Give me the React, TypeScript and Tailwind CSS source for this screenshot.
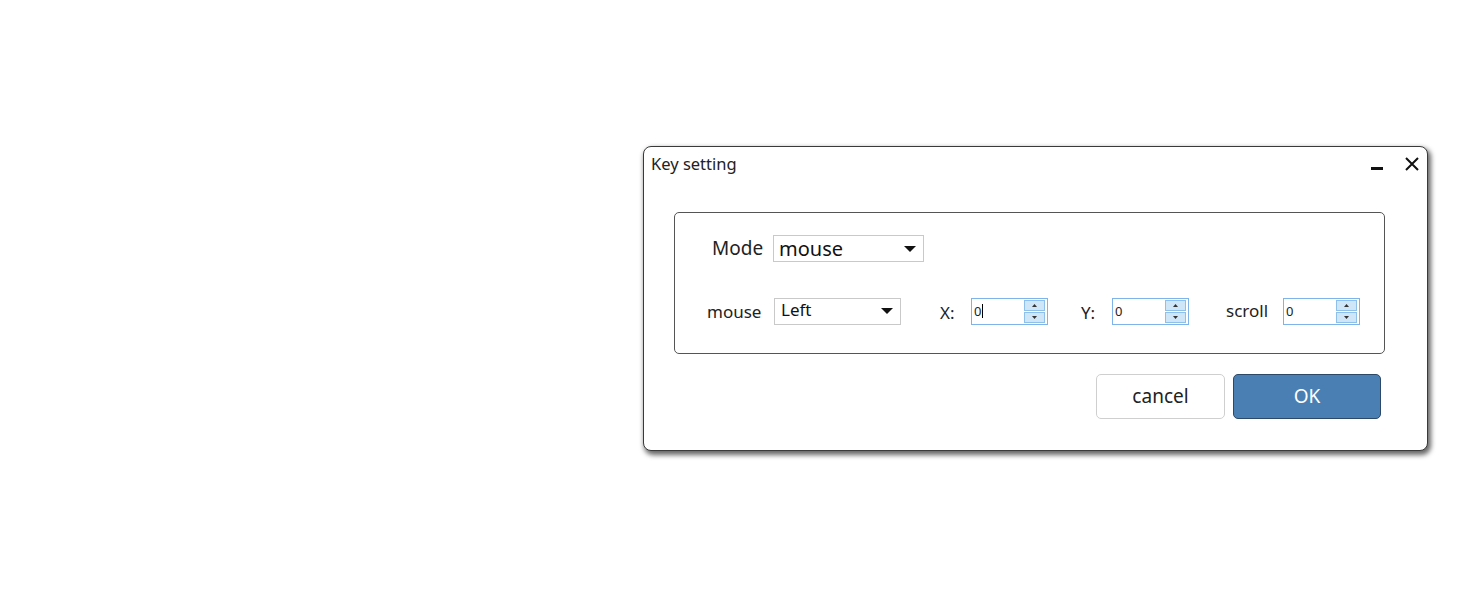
function Spin({ value, caret }: { value: string; caret?: boolean }) {
  return (
    <div className="flex items-center w-[77px] h-[27px] border border-[#7eb4ea] bg-white pl-[2px] pr-[2px]">
      <div className="flex-1 flex items-center text-[13px] leading-none text-[#222]">
        {value}
        {caret && <span className="ml-px w-px h-[14px] bg-black" />}
      </div>
      <div className="flex flex-col gap-px w-[21px]">
        <div className="h-[11px] bg-[#cfe6f8] border border-[#8fc0ea] flex items-center justify-center">
          <svg width="5" height="3" viewBox="0 0 5 3"><path d="M2.5 0L5 3H0z" fill="#333" /></svg>
        </div>
        <div className="h-[11px] bg-[#cfe6f8] border border-[#8fc0ea] flex items-center justify-center">
          <svg width="5" height="3" viewBox="0 0 5 3"><path d="M0 0H5L2.5 3z" fill="#333" /></svg>
        </div>
      </div>
    </div>
  );
}

function Arrow() {
  return (
    <svg width="12" height="6" viewBox="0 0 12 6">
      <path d="M0 0H12L6 6z" fill="#111" />
    </svg>
  );
}

export default function App() {
  return (
    <div
      className="w-[1464px] h-[600px] bg-white pt-[146px] pl-[643px]"
      style={{ fontFamily: '"Noto Sans", "Open Sans", sans-serif' }}
    >
      <div className="w-[785px] h-[305px] bg-white border-[1.5px] border-[#3a3a3a] rounded-[8px] shadow-[2px_3px_5px_1px_rgba(0,0,0,0.6)] flex flex-col">
        {/* title bar */}
        <div className="flex items-start h-[65px] pl-[7px] pr-[8px] pt-[5px]">
          <span className="text-[16.5px] leading-[24px] text-[#222]">Key setting</span>
          <div className="ml-auto flex items-center gap-[22px] pt-[5px]">
            <div className="w-[12px] h-[3px] bg-[#111] mt-[9px]" />
            <svg width="14" height="14" viewBox="0 0 14 14">
              <path d="M1 1L13 13M13 1L1 13" stroke="#111" strokeWidth="2" />
            </svg>
          </div>
        </div>

        {/* settings group */}
        <div className="ml-[30px] w-[711px] h-[142px] border border-[#555] rounded-[5px] flex flex-col">
          <div className="flex items-center mt-[22px] ml-[37px] h-[27px]">
            <span className="text-[19px] text-[#222] w-[61px]">Mode</span>
            <div className="flex items-center justify-between w-[151px] h-[27px] border border-[#c9c9c9] pl-[5px] pr-[7px]">
              <span className="text-[20px] leading-none text-[#111]">mouse</span>
              <Arrow />
            </div>
          </div>

          <div className="flex items-center mt-[35px] ml-[32px] h-[28px]">
            <span className="text-[17px] text-[#222] w-[67px] pt-[2px]">mouse</span>
            <div className="flex items-center justify-between w-[127px] h-[27px] border border-[#c9c9c9] pl-[6px] pr-[7px]">
              <span className="text-[17px] leading-none text-[#111] -mt-[4px]">Left</span>
              <Arrow />
            </div>
            <span className="text-[17px] text-[#222] ml-[39px] w-[31px] pt-[3px]">X:</span>
            <Spin value="0" caret />
            <span className="text-[17px] text-[#222] ml-[33px] w-[31px] pt-[3px]">Y:</span>
            <Spin value="0" />
            <span className="text-[17px] text-[#222] ml-[37px] w-[57px]">scroll</span>
            <Spin value="0" />
          </div>
        </div>

        {/* buttons */}
        <div className="flex justify-end gap-[8px] mt-[20px] mr-[46px]">
          <button className="w-[129px] h-[45px] rounded-[5px] border border-[#cfcfcf] bg-white text-[19px] text-[#222]">
            cancel
          </button>
          <button className="w-[148px] h-[45px] rounded-[5px] border border-[#2c4a68] bg-[#4a7fb3] text-[19px] text-white">
            OK
          </button>
        </div>
      </div>
    </div>
  );
}
